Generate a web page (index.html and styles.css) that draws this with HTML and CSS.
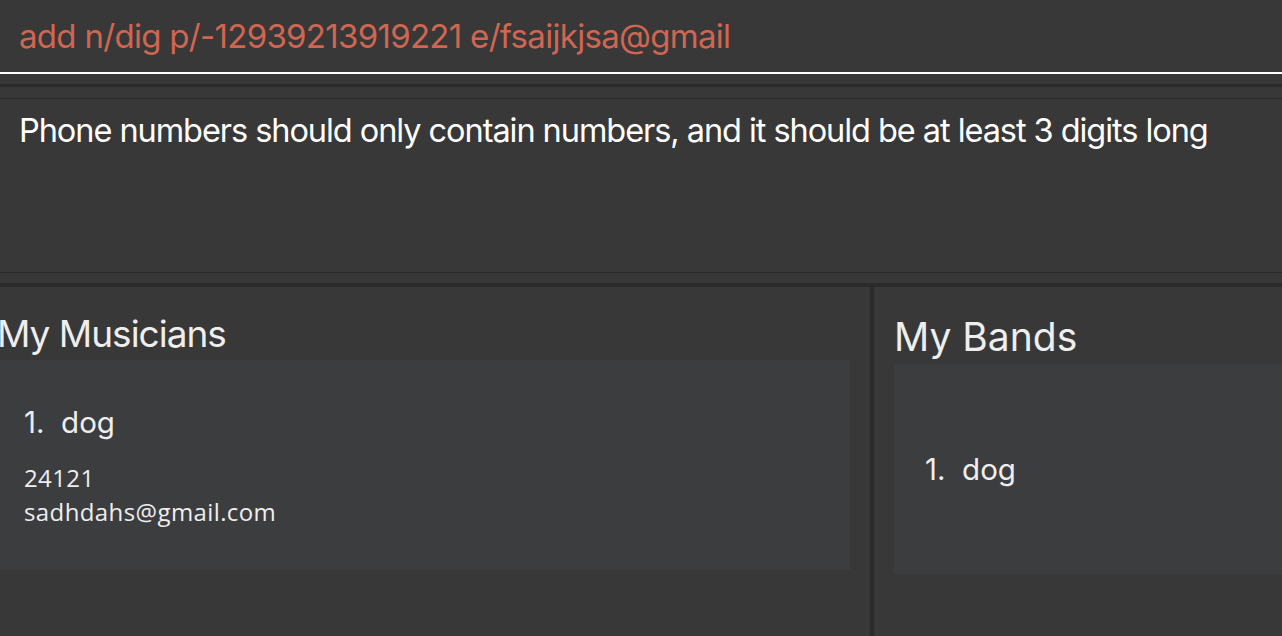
FILE: index.html
```html
<!DOCTYPE html>
<html>
<head>
<meta charset="utf-8">
<link rel="stylesheet" href="styles.css">
</head>
<body>
<div class="app">
  <div class="command-box">
    <div class="command-text">add n/dig p/-12939213919221 e/fsaijkjsa@gmail</div>
  </div>
  <div class="spacer-a"></div>
  <div class="sep-thick"></div>
  <div class="spacer-b"></div>
  <div class="sep-thin"></div>
  <div class="result">
    <div class="result-text">Phone numbers should only contain numbers, and it should be at least 3 digits long</div>
  </div>
  <div class="sep-thin"></div>
  <div class="spacer-c"></div>
  <div class="sep-thick lower"></div>
  <div class="lists">
    <section class="panel panel-left">
      <h2 class="panel-title title-left">My Musicians</h2>
      <div class="card card-left">
        <div class="card-name">1.&nbsp; dog</div>
        <div class="card-small first">24121</div>
        <div class="card-small">sadhdahs@gmail.com</div>
      </div>
    </section>
    <div class="divider"></div>
    <section class="panel panel-right">
      <h2 class="panel-title title-right">My Bands</h2>
      <div class="card card-right">
        <div class="card-name">1.&nbsp; dog</div>
      </div>
    </section>
  </div>
</div>
</body>
</html>
```
FILE: styles.css
```css
html, body {
  margin: 0;
  padding: 0;
  background: #383838;
  overflow: hidden;
}
.app {
  width: 1282px;
  height: 636px;
  display: flex;
  flex-direction: column;
  background: #383838;
  font-family: Inter, "Liberation Sans", sans-serif;
  color: #ffffff;
}
.command-box {
  border-bottom: 2px solid #ffffff;
  box-sizing: border-box;
  height: 74px;
  padding-left: 19px;
  display: flex;
  align-items: center;
}
.command-text {
  color: #d06651;
  font-size: 33px;
  letter-spacing: -0.7px;
  margin-top: -1px;
  white-space: nowrap;
}
.spacer-a { height: 10px; }
.sep-thick { height: 3px; background: #2b2b2b; }
.sep-thick.lower { height: 4px; }
.spacer-b { height: 11px; }
.sep-thin { height: 1px; background: #2b2b2b; }
.result {
  height: 173px;
  padding: 12px 0 0 19px;
  box-sizing: border-box;
}
.result-text {
  font-size: 32.5px;
  letter-spacing: -1.06px;
  color: #ffffff;
  white-space: nowrap;
}
.spacer-c { height: 10px; }
.lists {
  flex: 1;
  display: flex;
}
.panel {
  display: flex;
  flex-direction: column;
}
.panel-left {
  width: 870px;
}
.divider {
  width: 4px;
  background: #2b2b2b;
}
.panel-right {
  flex: 1;
  padding-left: 20px;
}
.panel-title {
  margin: 0;
  font-weight: 400;
  color: #eeeeee;
  white-space: nowrap;
}
.title-left {
  font-size: 37px;
  letter-spacing: -1px;
  margin-left: -3px;
  padding-top: 24px;
  height: 73px;
  box-sizing: border-box;
}
.title-right {
  font-size: 39px;
  letter-spacing: 0;
  padding-top: 26px;
  height: 77px;
  box-sizing: border-box;
}
.card {
  background: #3c3d3f;
  height: 210px;
  box-sizing: border-box;
}
.card-left {
  width: 850px;
  padding: 44px 0 0 24px;
}
.card-right {
  padding-left: 31px;
  display: flex;
  align-items: center;
}
.card-name {
  font-size: 29.5px;
  color: #eeeeee;
}
.card-small {
  font-family: "Open Sans", sans-serif;
  font-size: 24px;
  letter-spacing: 0.4px;
  color: #eeeeee;
  line-height: 34px;
}
.card-small.first {
  margin-top: 21px;
}
```
